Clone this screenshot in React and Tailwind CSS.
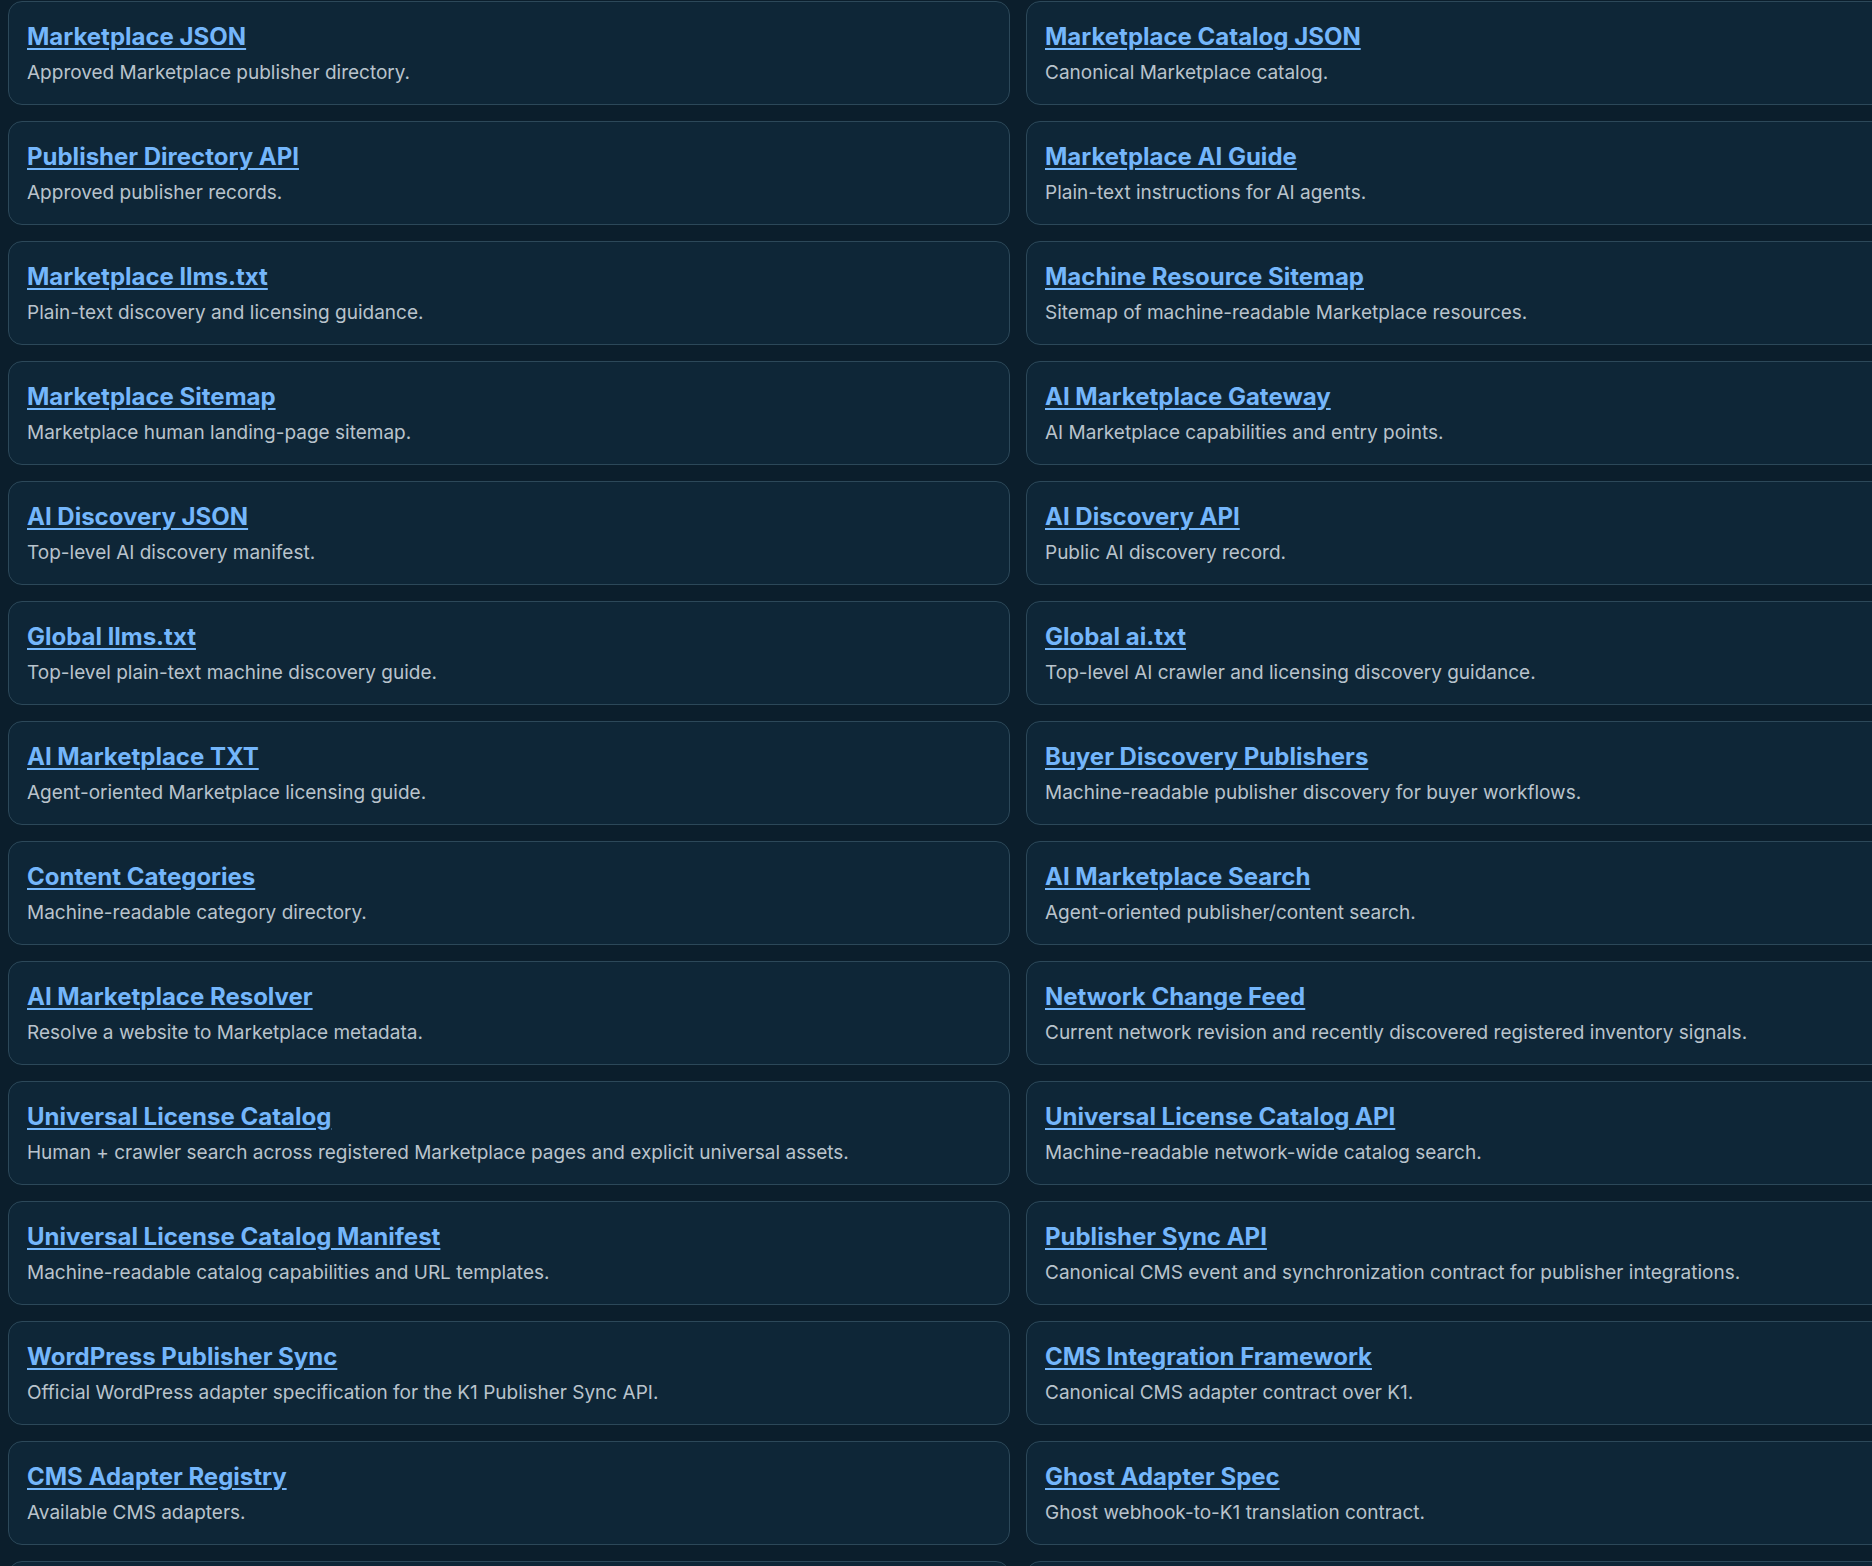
const resources = [
  ['Marketplace JSON', 'Approved Marketplace publisher directory.'],
  ['Marketplace Catalog JSON', 'Canonical Marketplace catalog.'],
  ['Publisher Directory API', 'Approved publisher records.'],
  ['Marketplace AI Guide', 'Plain-text instructions for AI agents.'],
  ['Marketplace llms.txt', 'Plain-text discovery and licensing guidance.'],
  ['Machine Resource Sitemap', 'Sitemap of machine-readable Marketplace resources.'],
  ['Marketplace Sitemap', 'Marketplace human landing-page sitemap.'],
  ['AI Marketplace Gateway', 'AI Marketplace capabilities and entry points.'],
  ['AI Discovery JSON', 'Top-level AI discovery manifest.'],
  ['AI Discovery API', 'Public AI discovery record.'],
  ['Global llms.txt', 'Top-level plain-text machine discovery guide.'],
  ['Global ai.txt', 'Top-level AI crawler and licensing discovery guidance.'],
  ['AI Marketplace TXT', 'Agent-oriented Marketplace licensing guide.'],
  ['Buyer Discovery Publishers', 'Machine-readable publisher discovery for buyer workflows.'],
  ['Content Categories', 'Machine-readable category directory.'],
  ['AI Marketplace Search', 'Agent-oriented publisher/content search.'],
  ['AI Marketplace Resolver', 'Resolve a website to Marketplace metadata.'],
  ['Network Change Feed', 'Current network revision and recently discovered registered inventory signals.'],
  ['Universal License Catalog', 'Human + crawler search across registered Marketplace pages and explicit universal assets.'],
  ['Universal License Catalog API', 'Machine-readable network-wide catalog search.'],
  ['Universal License Catalog Manifest', 'Machine-readable catalog capabilities and URL templates.'],
  ['Publisher Sync API', 'Canonical CMS event and synchronization contract for publisher integrations.'],
  ['WordPress Publisher Sync', 'Official WordPress adapter specification for the K1 Publisher Sync API.'],
  ['CMS Integration Framework', 'Canonical CMS adapter contract over K1.'],
  ['CMS Adapter Registry', 'Available CMS adapters.'],
  ['Ghost Adapter Spec', 'Ghost webhook-to-K1 translation contract.'],
];

const ResourceCard = ({ title, description }) => (
  <div className="h-[104px] rounded-[14px] border border-[#2c4859] bg-[#0e2637] px-[18px] pt-[20px]">
    {title && (
      <>
        <a
          href="#"
          className="block w-fit text-[24px] font-bold leading-[30px] text-[#74b6fb] underline decoration-2 underline-offset-[3px]"
        >
          {title}
        </a>
        <p className="mt-[7px] text-[19px] leading-[28px] text-[#b9c3cc]">{description}</p>
      </>
    )}
  </div>
);

export default function App() {
  return (
    <div
      className="h-[1566px] w-full overflow-hidden bg-[#0b1e2c]"
      style={{ fontFamily: 'Inter, "Noto Sans", sans-serif' }}
    >
      <div className="grid grid-cols-[1002px_1002px] gap-4 pl-2 pt-px">
        {resources.map(([title, description]) => (
          <ResourceCard key={title} title={title} description={description} />
        ))}
        {/* next row, only its top edge shows */}
        <ResourceCard />
        <ResourceCard />
      </div>
    </div>
  );
}
